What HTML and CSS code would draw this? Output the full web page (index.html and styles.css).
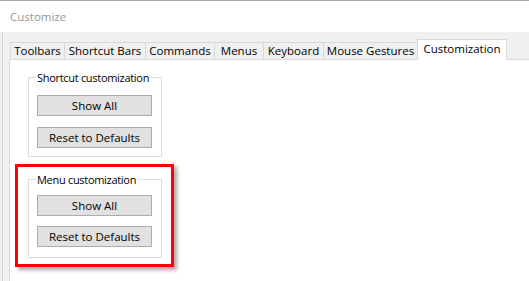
FILE: index.html
```html
<!DOCTYPE html>
<html lang="en">
  <head>
    <meta charset="UTF-8" />
    <meta name="viewport" content="width=device-width, initial-scale=1.0" />
    <title>Customize</title>
    <link rel="stylesheet" href="styles.css">
  </head>
  <body>
    <div class="window">
      <header class="titlebar">Customize</header>

      <div class="client">
        <nav class="tabs">
          <div class="tab tab-toolbars">Toolbars</div>
          <div class="tab tab-shortcut">Shortcut Bars</div>
          <div class="tab tab-commands">Commands</div>
          <div class="tab tab-menus">Menus</div>
          <div class="tab tab-keyboard">Keyboard</div>
          <div class="tab tab-gestures">Mouse Gestures</div>
          <div class="tab tab-custom active">Customization</div>
        </nav>

        <section class="panel">
          <fieldset class="group">
            <legend>Shortcut customization</legend>
            <button type="button">Show All</button>
            <button type="button">Reset to Defaults</button>
          </fieldset>

          <div class="highlight">
            <fieldset class="group">
              <legend>Menu customization</legend>
              <button type="button">Show All</button>
              <button type="button">Reset to Defaults</button>
            </fieldset>
          </div>
        </section>
      </div>
    </div>
  </body>
</html>
```

FILE: styles.css
```css
/* General Reset */
* {
  margin: 0;
  padding: 0;
  box-sizing: border-box;
  font-family: "Open Sans", "Noto Sans", sans-serif;
}

body {
  background-color: #f0f0f0;
  width: 529px;
  height: 281px;
  overflow: hidden;
}

.window {
  display: flex;
  flex-direction: column;
  height: 100%;
}

/* Title bar */
.titlebar {
  height: 32px;
  background-color: white;
  border-top: 1px solid #a6a6a6;
  padding-left: 10px;
  font-size: 11.5px;
  line-height: 31px;
  color: #999999;
}

/* Client area */
.client {
  flex-grow: 1;
  display: flex;
  flex-direction: column;
  margin-left: 2px;
  border-left: 1px solid #cfcfcf;
  padding: 7px 0 0 6px;
}

/* Tabs */
.tabs {
  display: flex;
  align-items: flex-end;
  padding-left: 1px;
  position: relative;
  z-index: 1;
}

.tab {
  height: 17px;
  border: 1px solid #d9d9d9;
  border-bottom: none;
  margin-left: -1px;
  font-size: 11.5px;
  line-height: 16px;
  color: #000;
  text-align: center;
  white-space: nowrap;
}

.tab:first-child {
  margin-left: 0;
}

.tab-toolbars { width: 55px; }
.tab-shortcut { width: 82px; }
.tab-commands { width: 70px; }
.tab-menus { width: 50px; }
.tab-keyboard { width: 61px; }
.tab-gestures { width: 95px; }
.tab-custom { width: 90px; }

.tab.active {
  height: 21px;
  margin-bottom: -1px;
  background-color: white;
  line-height: 18px;
}

/* Tab page */
.panel {
  flex-grow: 1;
  background-color: white;
  border-top: 1px solid #d9d9d9;
  border-left: 1px solid #d9d9d9;
  padding: 10px 0 0 18px;
}

.group {
  width: 134px;
  min-width: 0;
  border: 1px solid #dcdcdc;
  padding: 0 8px 8px 8px;
}

.group legend {
  margin-left: -1px;
  padding: 0 1px;
  font-size: 11px;
  letter-spacing: -0.3px;
  line-height: 15px;
  color: #000;
  white-space: nowrap;
}

.group button {
  display: block;
  width: 115px;
  height: 21px;
  margin-top: 10px;
  background-color: #e1e1e1;
  border: 1px solid #adadad;
  font-size: 11.5px;
  color: #000;
}

.group button + button {
  margin-top: 11px;
}

/* Red annotation box */
.highlight {
  width: 159px;
  margin: 7px 0 0 -13px;
  border: 3px solid #ff0000;
  padding: 5px 9px 6px 10px;
  box-shadow: 3px 3px 4px rgba(0, 0, 0, 0.35);
}

.highlight .group button {
  margin-top: 8px;
}

.highlight .group button + button {
  margin-top: 10px;
}

.highlight .group {
  padding-bottom: 10px;
}
```
